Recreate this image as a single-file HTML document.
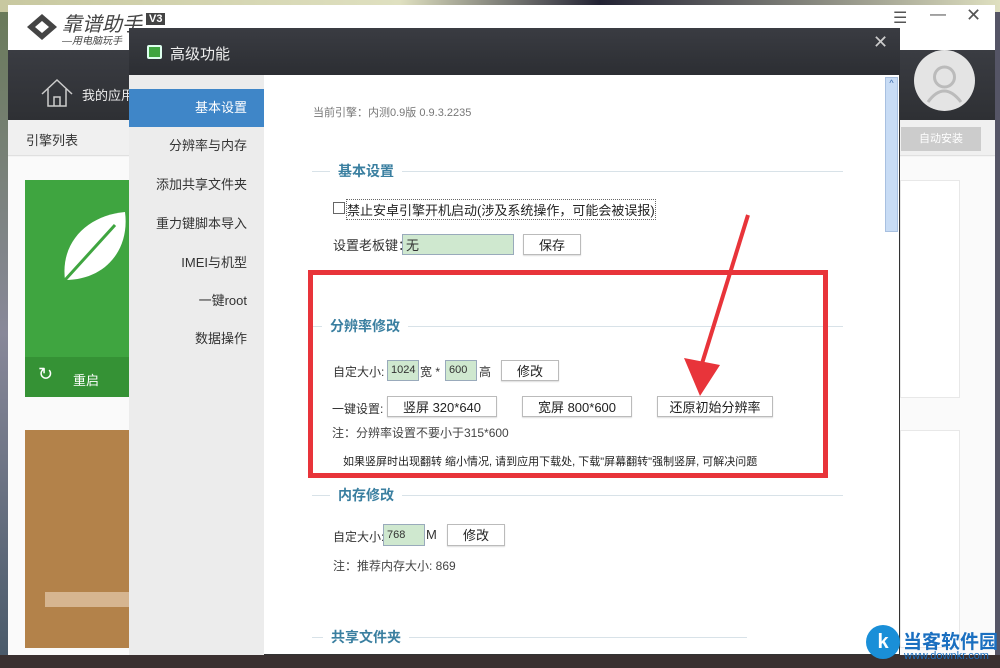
<!DOCTYPE html>
<html><head><meta charset="utf-8"><style>
*{margin:0;padding:0;box-sizing:border-box}
body{width:1000px;height:668px;overflow:hidden;position:relative;background:#5a6a4a;font-family:"Liberation Sans","Noto Sans CJK SC",sans-serif;font-size:12px;color:#333}
.a{position:absolute}
.btn{position:absolute;background:#fff;border:1px solid #bbb;text-align:center;color:#222;font-size:13px;box-shadow:0 1px 1px #ddd}
.inp{position:absolute;background:#cfe8cf;border:1px solid #9ab;font-size:11px;padding-left:3px}
.sec{position:absolute;left:312px;height:1px;background:#d8e2e8}
.st{position:absolute;background:#fff;color:#3a7fa0;font-weight:bold;font-size:14px;padding:0 8px}
.nav{position:absolute;left:129px;width:135px;text-align:right;padding-right:17px;font-size:13px;color:#333;height:38px;line-height:38px}
</style></head><body>
<div class="a" style="left:0;top:0;width:1000px;height:12px;background:linear-gradient(90deg,#c8c8a0,#dfe0c0 40%,#223 60%,#dfe0c0)"></div>
<div class="a" style="left:0;top:655px;width:1000px;height:13px;background:#3a3030"></div>
<div class="a" style="left:0;top:12px;width:10px;height:643px;background:linear-gradient(#6a7a5a,#889,#4a5a6a)"></div>
<div class="a" style="left:995px;top:12px;width:5px;height:643px;background:#556"></div>
<!-- main window -->
<div class="a" style="left:8px;top:5px;width:987px;height:650px;background:#f4f4f4"></div>
<div class="a" style="left:8px;top:5px;width:987px;height:45px;background:#fff"></div>
<svg class="a" style="left:25px;top:12px" width="34" height="30"><path d="M17 2 L32 15 L17 28 L2 15 Z" fill="#444"/><path d="M17 9 L24 15 L17 21 L10 15 Z" fill="#fff"/></svg>
<div class="a" style="left:62px;top:8px;font-size:20px;font-style:italic;color:#444">靠谱助手</div>
<div class="a" style="left:146px;top:13px;background:#444;color:#fff;font-size:11px;padding:0 3px;font-weight:bold">V3</div>
<div class="a" style="left:62px;top:32px;font-size:10px;font-style:italic;color:#444">—用电脑玩手</div>
<div class="a" style="left:893px;top:8px;font-size:16px;color:#555">☰</div>
<div class="a" style="left:930px;top:6px;font-size:16px;color:#555">—</div>
<div class="a" style="left:966px;top:5px;font-size:18px;color:#555">✕</div>
<div class="a" style="left:8px;top:50px;width:987px;height:70px;background:linear-gradient(#3a3c42,#2e3034)"></div>
<svg class="a" style="left:40px;top:78px" width="34" height="30"><path d="M2 16 L17 2 L32 16 M8 11 V28 H26 V11 M14 28 V19 H20 V28" fill="none" stroke="#ccc" stroke-width="1.5"/></svg>
<div class="a" style="left:82px;top:85px;color:#eee;font-size:13px">我的应用</div>
<div class="a" style="left:914px;top:50px;width:61px;height:61px;border-radius:50%;background:#e4e4e4"></div>
<svg class="a" style="left:914px;top:50px" width="61" height="61"><circle cx="30.5" cy="27" r="10" fill="none" stroke="#bbb" stroke-width="3"/><path d="M14 52 Q30 30 47 52" fill="none" stroke="#bbb" stroke-width="3"/></svg>
<div class="a" style="left:8px;top:120px;width:987px;height:36px;background:#f0f0f0;border-bottom:1px solid #e0e0e0"></div>
<div class="a" style="left:26px;top:130px;font-size:13px;color:#333">引擎列表</div>
<div class="a" style="left:901px;top:127px;width:80px;height:24px;background:#ccc;color:#fff;text-align:center;line-height:24px;font-size:11px">自动安装</div>
<div class="a" style="left:8px;top:157px;width:987px;height:498px;background:#fafafa"></div>
<div class="a" style="left:25px;top:180px;width:175px;height:217px;background:#3fa540"></div>
<svg class="a" style="left:60px;top:210px" width="70" height="75"><path d="M5 70 C0 30 30 5 65 2 C70 40 45 70 5 70 Z" fill="#fff"/><path d="M5 70 L55 15" stroke="#3fa540" stroke-width="3"/></svg>
<div class="a" style="left:25px;top:357px;width:175px;height:40px;background:#359235"></div>
<div class="a" style="left:38px;top:364px;color:#fff;font-size:18px">↻</div>
<div class="a" style="left:73px;top:370px;color:#fff;font-size:13px">重启</div>
<div class="a" style="left:25px;top:430px;width:175px;height:218px;background:#b3824a"></div>
<div class="a" style="left:45px;top:592px;width:155px;height:15px;background:#d6b590"></div>
<div class="a" style="left:900px;top:180px;width:60px;height:218px;background:#fff;border:1px solid #e8e8e8"></div>
<div class="a" style="left:900px;top:430px;width:60px;height:218px;background:#fff;border:1px solid #e8e8e8"></div>
<!-- dialog -->
<div class="a" style="left:129px;top:28px;width:771px;height:627px;background:#fff;border:1px solid #333"></div>
<div class="a" style="left:129px;top:28px;width:771px;height:47px;background:linear-gradient(#3a3c42,#2c2e33)"></div>
<div class="a" style="left:147px;top:45px;width:15px;height:14px;background:#3fa540;border-radius:2px;border:2px solid #dfe"></div>
<div class="a" style="left:170px;top:43px;color:#eee;font-size:15px">高级功能</div>
<div class="a" style="left:873px;top:32px;color:#ccc;font-size:18px">✕</div>
<div class="a" style="left:129px;top:75px;width:135px;height:580px;background:#ececec"></div>
<div class="nav" style="top:89px;background:#3f86c8;color:#fff">基本设置</div>
<div class="nav" style="top:127px">分辨率与内存</div>
<div class="nav" style="top:166px">添加共享文件夹</div>
<div class="nav" style="top:205px">重力键脚本导入</div>
<div class="nav" style="top:244px">IMEI与机型</div>
<div class="nav" style="top:282px">一键root</div>
<div class="nav" style="top:320px">数据操作</div>
<div class="a" style="left:885px;top:77px;width:13px;height:155px;background:#c8dcf5;border:1px solid #a8c0e0"></div>
<div class="a" style="left:886px;top:78px;width:11px;height:14px;color:#36a;font-size:9px;text-align:center">^</div>
<div class="a" style="left:313px;top:104px;color:#777;font-size:11px">当前引擎：内测0.9版 0.9.3.2235</div>
<div class="sec" style="top:171px;width:531px"></div><div class="st" style="left:330px;top:161px">基本设置</div>
<div class="a" style="left:333px;top:202px;width:12px;height:12px;border:1px solid #666"></div>
<div class="a" style="left:346px;top:199px;font-size:13px;color:#222;border:1px dotted #666">禁止安卓引擎开机启动(涉及系统操作，可能会被误报)</div>
<div class="a" style="left:333px;top:235px;font-size:13px">设置老板键：</div>
<div class="inp" style="left:402px;top:234px;width:112px;height:21px;font-size:13px">无</div>
<div class="btn" style="left:523px;top:234px;width:58px;height:21px">保存</div>
<div class="sec" style="top:326px;width:531px"></div><div class="st" style="left:322px;top:316px">分辨率修改</div>
<div class="a" style="left:333px;top:363px;font-size:12px">自定大小:</div>
<div class="inp" style="left:387px;top:360px;width:32px;height:21px;line-height:19px">1024</div>
<div class="a" style="left:420px;top:363px">宽 *</div>
<div class="inp" style="left:445px;top:360px;width:32px;height:21px;line-height:19px">600</div>
<div class="a" style="left:479px;top:363px">高</div>
<div class="btn" style="left:501px;top:360px;width:58px;height:21px">修改</div>
<div class="a" style="left:332px;top:400px">一键设置:</div>
<div class="btn" style="left:387px;top:396px;width:110px;height:21px">竖屏 320*640</div>
<div class="btn" style="left:522px;top:396px;width:110px;height:21px">宽屏 800*600</div>
<div class="btn" style="left:657px;top:396px;width:116px;height:21px">还原初始分辨率</div>
<div class="a" style="left:332px;top:424px;font-size:12px;color:#444">注：分辨率设置不要小于315*600</div>
<div class="a" style="left:343px;top:453px;font-size:11px;color:#222">如果竖屏时出现翻转 缩小情况, 请到应用下载处, 下载"屏幕翻转"强制竖屏, 可解决问题</div>
<div class="a" style="left:308px;top:270px;width:520px;height:208px;border:5px solid #e8343a"></div>
<svg class="a" style="left:680px;top:200px" width="80" height="210"><path d="M68 15 L20 170" stroke="#e8343a" stroke-width="4"/><path d="M4 158 L20 196 L40 165 Z" fill="#e8343a"/></svg>
<div class="sec" style="top:495px;width:531px"></div><div class="st" style="left:330px;top:485px">内存修改</div>
<div class="a" style="left:333px;top:528px">自定大小:</div>
<div class="inp" style="left:383px;top:524px;width:42px;height:22px;line-height:20px">768</div>
<div class="a" style="left:426px;top:527px;font-size:13px">M</div>
<div class="btn" style="left:447px;top:524px;width:58px;height:22px">修改</div>
<div class="a" style="left:333px;top:557px;color:#444">注：推荐内存大小: 869</div>
<div class="sec" style="top:637px;width:435px"></div><div class="st" style="left:323px;top:627px">共享文件夹</div>
<!-- watermark -->
<div class="a" style="left:866px;top:625px;width:34px;height:34px;border-radius:50%;background:#1a8fd8;color:#fff;font-weight:bold;text-align:center;line-height:34px;font-size:20px">k</div>
<div class="a" style="left:903px;top:627px;color:#1a6fc0;font-size:19px;font-weight:bold">当客软件园</div>
<div class="a" style="left:904px;top:650px;color:#1a6fc0;font-size:11px">www.downkr.com</div>
</body></html>
